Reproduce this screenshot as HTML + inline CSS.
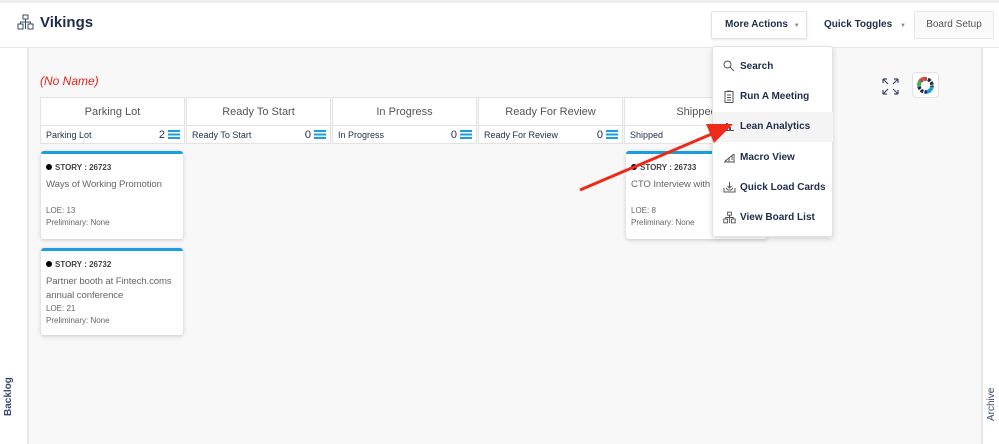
<!DOCTYPE html>
<html><head><meta charset="utf-8"><style>
*{box-sizing:border-box;margin:0;padding:0}
body{width:999px;height:444px;overflow:hidden;background:#fff;font-family:"Liberation Sans",Arial,sans-serif;position:relative;color:#1f2d4a}
.abs{position:absolute}
.col{position:absolute;top:97px;width:145px;height:47px;background:#fff;border:1px solid #e3e3e3}
.col .t{height:28px;line-height:28px;text-align:center;font-size:11px;color:#555;border-bottom:1px solid #e3e3e3}
.col .s{height:18px;line-height:18px;font-size:9px;color:#1f2d4a;padding-left:5px;position:relative}
.col .s .n{position:absolute;right:4px;top:0;font-size:11px}
.col .s .n i{display:inline-block;width:12px;height:9px;vertical-align:-1px;margin-left:3px;background:linear-gradient(#1a9ee0 0 2px,transparent 2px 3.5px,#1a9ee0 3.5px 5.5px,transparent 5.5px 7px,#1a9ee0 7px 9px)}
.card{position:absolute;background:#fff;border-top:3px solid #1a9ee0;border-radius:3px;box-shadow:0 1px 4px rgba(0,0,0,.2);padding:9px 5px 6px;color:#666}
.card .id{font-size:8px;font-weight:bold;color:#444;line-height:10px}
.card .id:before{content:"";display:inline-block;width:6px;height:6px;border-radius:50%;background:#000;margin-right:3px;vertical-align:0}
.card .ti{font-size:9.6px;margin-top:5px;line-height:14px;letter-spacing:-0.1px}
.card .m{font-size:8px;line-height:12px}
.mi{position:absolute;left:0;width:120px;height:30px;line-height:30px;font-size:10px;font-weight:bold;color:#1f2d4a;padding-left:27px}
.mi svg{position:absolute;left:10px;top:8px}
</style></head><body>
<div class="abs" style="left:0;top:0;width:999px;height:3px;background:#efefef"></div>
<div class="abs" style="left:0;top:47px;width:999px;height:1px;background:#e8e8e8"></div>
<svg class="abs" style="left:17px;top:14px" width="17" height="16" viewBox="0 0 17 16" fill="none" stroke="#3b4a66" stroke-width="1"><rect x="6" y="1" width="5" height="4"/><rect x="1" y="10" width="5" height="5"/><rect x="11" y="10" width="5" height="5"/><path d="M8.5 5v3M3.5 10V8h10v2M8.5 8v7"/></svg>
<div class="abs" style="left:40px;top:14px;font-size:15px;font-weight:bold;color:#1f2d4a">Vikings</div>
<div class="abs" style="left:711px;top:11px;width:96px;height:28px;border:1px solid #e3e3e3;border-radius:2px;box-shadow:0 1px 2px rgba(0,0,0,.1);font-size:10px;font-weight:bold;line-height:26px;padding-left:13px">More Actions <span style="color:#888;font-size:6px;margin-left:3px">▼</span></div>
<div class="abs" style="left:824px;top:19px;font-size:10px;font-weight:bold">Quick Toggles <span style="color:#888;font-size:6px;margin-left:5px">▼</span></div>
<div class="abs" style="left:914px;top:11px;width:80px;height:28px;border:1px solid #e8e8e8;background:#fafafa;border-radius:2px;font-size:10px;color:#555;line-height:26px;text-align:center">Board Setup</div>
<div class="abs" style="left:27px;top:48px;width:956px;height:396px;background:#f8f8f8;border-left:2px solid #e6e6e6;border-right:2px solid #e6e6e6"></div>
<div class="abs" style="left:3px;top:416px;transform:rotate(-90deg);transform-origin:0 0;font-size:10px;font-weight:bold;color:#3b4a66">Backlog</div>
<div class="abs" style="left:986px;top:421px;transform:rotate(-90deg);transform-origin:0 0;font-size:10px;color:#3b4a66">Archive</div>
<div class="abs" style="left:40px;top:74px;font-size:12px;font-style:italic;color:#e8231b">(No Name)</div>
<div class="col" style="left:40px"><div class="t">Parking Lot</div><div class="s">Parking Lot<span class="n">2<i></i></span></div></div>
<div class="col" style="left:186px"><div class="t">Ready To Start</div><div class="s">Ready To Start<span class="n">0<i></i></span></div></div>
<div class="col" style="left:332px"><div class="t">In Progress</div><div class="s">In Progress<span class="n">0<i></i></span></div></div>
<div class="col" style="left:478px"><div class="t">Ready For Review</div><div class="s">Ready For Review<span class="n">0<i></i></span></div></div>
<div class="col" style="left:624px"><div class="t">Shipped</div><div class="s">Shipped</div></div>
<div class="card" style="left:41px;top:151px;width:142px;height:88px"><div class="id">STORY : 26723</div><div class="ti">Ways of Working Promotion</div><div class="m" style="margin-top:13px">LOE: 13<br>Preliminary: None</div></div>
<div class="card" style="left:41px;top:248px;width:142px;height:87px"><div class="id">STORY : 26732</div><div class="ti" style="white-space:nowrap">Partner booth at Fintech.coms<br>annual conference</div><div class="m" style="margin-top:0">LOE: 21<br>Preliminary: None</div></div>
<div class="card" style="left:626px;top:151px;width:141px;height:88px;overflow:hidden;white-space:nowrap"><div class="id">STORY : 26733</div><div class="ti">CTO Interview with B</div><div class="m" style="margin-top:13px">LOE: 8<br>Preliminary: None</div></div>
<svg class="abs" style="left:882px;top:78px" width="17" height="17" viewBox="0 0 17 17" fill="none" stroke="#3b4a66" stroke-width="1.2"><path d="M1 1l5 5M1 1h4M1 1v4M16 1l-5 5M16 1h-4M16 1v4M1 16l5-5M1 16h4M1 16v-4M16 16l-5-5M16 16h-4M16 16v-4"/></svg>
<div class="abs" style="left:912px;top:72px;width:27px;height:26px;background:#fff;border:1px solid #e3e3e3;border-radius:4px"></div>
<svg class="abs" style="left:916px;top:76px" width="19" height="19" viewBox="0 0 19 19" fill="none" stroke-width="3.5"><circle cx="9.5" cy="9.5" r="6.5" stroke="#1f2d4a" stroke-dasharray="3 1.1"/><path d="M4 5a7 7 0 0 1 6-2.5" stroke="#e8403a"/><path d="M3 10a7 7 0 0 1 1-5" stroke="#3bb34a"/><path d="M11 16a7 7 0 0 0 5-5" stroke="#1a9ee0"/></svg>
<div class="abs" style="left:712px;top:46px;width:121px;height:191px;background:#fff;border:1px solid #e3e3e3;border-radius:3px;box-shadow:0 2px 6px rgba(0,0,0,.15)">
<div class="mi" style="top:5px"><svg width="12" height="12" viewBox="0 0 12 12" fill="none" stroke="#555"><circle cx="4.5" cy="4.5" r="3.5"/><path d="M7 7l4 4"/></svg>Search</div>
<div class="mi" style="top:35px"><svg width="12" height="13" viewBox="0 0 12 13" fill="none" stroke="#555"><rect x="2" y="1.5" width="8" height="11"/><path d="M4 1h4M4 5h4M4 7.5h4M4 10h4"/></svg>Run A Meeting</div>
<div class="mi" style="top:65px;background:#f4f4f4"><svg width="12" height="12" viewBox="0 0 12 12" fill="#555"><rect x="3" y="3" width="2" height="8"/><rect x="6" y="7" width="2" height="4"/><rect x="1" y="10" width="10" height="1"/></svg>Lean Analytics</div>
<div class="mi" style="top:96px"><svg width="13" height="12" viewBox="0 0 13 12" fill="none" stroke="#555"><path d="M1 11h11M2 10l9-7M3 9v2M6 7v4M9 5v4M11 3v8"/></svg>Macro View</div>
<div class="mi" style="top:126px"><svg width="13" height="12" viewBox="0 0 13 12" fill="none" stroke="#555"><path d="M1 7v4h11V7M3 7l2 2h3l2-2M6.5 1v6M4.5 5l2 2 2-2"/></svg>Quick Load Cards</div>
<div class="mi" style="top:156px"><svg width="13" height="13" viewBox="0 0 17 16" fill="none" stroke="#555" stroke-width="1.2"><rect x="6" y="1" width="5" height="4"/><rect x="1" y="10" width="5" height="5"/><rect x="11" y="10" width="5" height="5"/><path d="M8.5 5v3M3.5 10V8h10v2M8.5 8v7"/></svg>View Board List</div>
</div>
<svg class="abs" style="left:0;top:0" width="999" height="444"><path d="M580 190L714 133" stroke="#ee2a1b" stroke-width="3"/><path d="M733 124L706 124L714 143Z" fill="#ee2a1b"/></svg>
</body></html>
